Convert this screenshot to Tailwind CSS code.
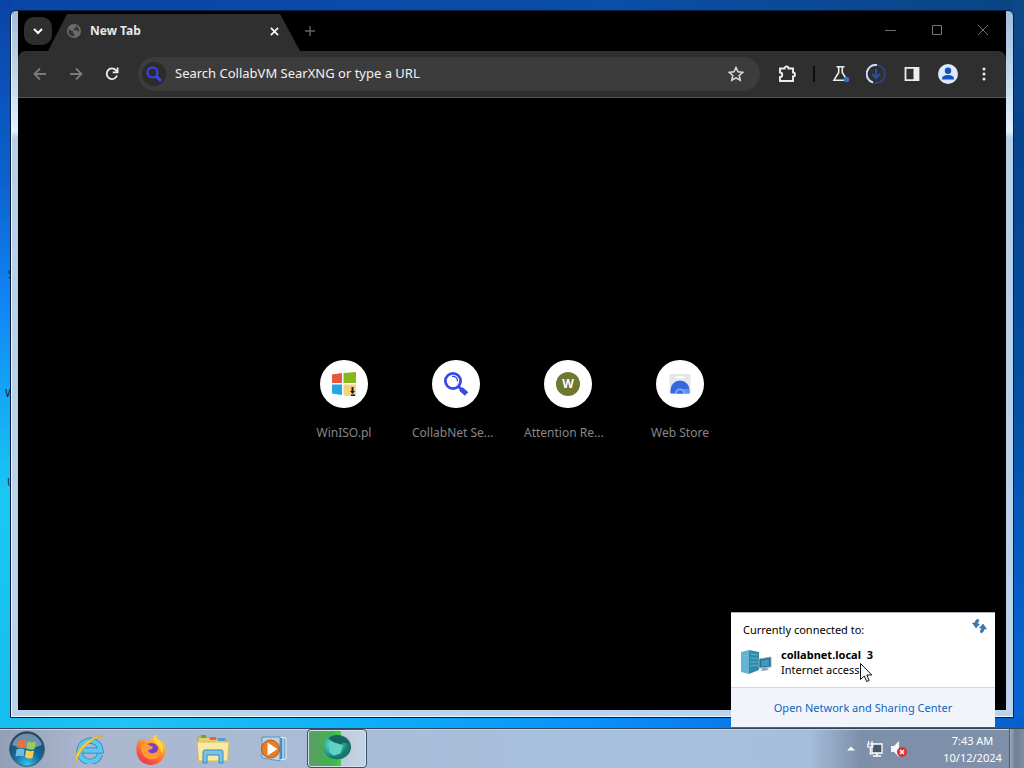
<!DOCTYPE html>
<html lang="en">
<head>
  <meta charset="UTF-8" />
  <meta name="viewport" content="width=device-width, initial-scale=1.0"/>
  <title>New Tab</title>
  <script src="https://cdn.jsdelivr.net/npm/@tailwindcss/browser@4"></script>
</head>
<body class="h-screen overflow-hidden flex flex-col font-['Noto_Sans','Open_Sans',sans-serif] text-xs">

  <!-- Desktop -->
  <main class="relative flex-1 min-h-0 flex p-[10px] bg-[linear-gradient(90deg,#0a45a8,#0a4ea8_60%,#0a4482)]">
    <div class="absolute inset-y-0 left-0 w-3 bg-[linear-gradient(180deg,#0a43a6,#0b62cf_25%,#1185f5_42%,#14a8f5_55%,#19c8f3_68%,#16bdee)]"></div>
    <div class="absolute inset-y-0 right-0 w-3 bg-[linear-gradient(180deg,#0d4888,#06448f_20%,#0350a4_55%,#0560ca_85%,#0666d2)]"></div>
    <div class="absolute inset-x-0 bottom-0 h-[11px] bg-[linear-gradient(90deg,#16bdee,#1fc3f5_12%,#0eb0f8_35%,#0a90fa_58%,#0874e6_75%,#0560cc)]"></div>
    <!-- Icon captions showing past the window edge -->
    <span class="absolute left-[8px] top-[267px] text-[11px] text-[#10233c]">S</span>
    <span class="absolute left-[5px] top-[386px] text-[11px] text-[#10233c]">W</span>
    <span class="absolute left-[7px] top-[475px] text-[11px] text-[#10233c]">U</span>

    <!-- Browser window -->
    <section class="relative flex-1 flex rounded-t-md border border-[#061d3f] bg-[linear-gradient(180deg,#9fbede,#dbedfb_16%,#e4f2fc_17%,#b6d0ea_18%,#bcd3ec)] pl-[7px] pr-[7px] pb-[7px] shadow-[inset_1px_-1px_0_#eef8ff]">
      <div class="flex-1 min-w-0 flex flex-col bg-black">
        <!-- Tab strip -->
        <div class="h-10 flex items-center text-[#e8e8e8]">
          <button aria-label="Search tabs" class="ml-[6px] size-7 rounded-[10px] bg-[#2e2e2e] grid place-items-center">
            <svg class="size-3" viewBox="0 0 12 12" fill="none" stroke="#fff" stroke-width="2"><path d="M2 4l4 4 4-4"/></svg>
          </button>
          <div class="self-end -ml-1 h-[37px] w-[252px] flex items-center pl-[19px] pr-[20px] pb-[3px] bg-[#2f2f2f] [clip-path:polygon(19px_0,232px_0,252px_100%,0_100%)]">
            <svg class="size-[14px]" viewBox="0 0 14 14"><circle cx="7" cy="7" r="7" fill="#6c6c6c"/><path d="M2 4.500q1.500 3 4 2.500v2l1.500 1v2.500q-5 0-6-4zM6 1.500h3v2H7.500V5H6l2 1.500h2.500L12.500 8q-.5-5-4-6.500z" fill="#363636"/></svg>
            <span class="ml-[9px] flex-1 font-bold">New Tab</span>
            <button aria-label="Close tab" class="size-3 grid place-items-center"><svg class="size-[9px]" viewBox="0 0 10 10" stroke="#f4f4f4" stroke-width="2"><path d="M1 1l8 8M9 1L1 9"/></svg></button>
          </div>
          <button aria-label="New tab" class="ml-[2px] size-4 grid place-items-center"><svg class="size-[10px]" viewBox="0 0 10 10" stroke="#626262" stroke-width="1.400"><path d="M5 0v10M0 5h10"/></svg></button>
          <div class="ml-auto flex pr-[17px] gap-[34px]">
            <button aria-label="Minimize"><svg class="size-3" viewBox="0 0 12 12" stroke="#6c6c6c"><path d="M0 5.500h11"/></svg></button>
            <button aria-label="Maximize"><svg class="size-3" viewBox="0 0 12 12" fill="none" stroke="#777"><path d="M1.500 .5h9v9h-9z"/></svg></button>
            <button aria-label="Close"><svg class="size-3" viewBox="0 0 12 12" stroke="#757575"><path d="M1 0l10 10M11 0L1 10"/></svg></button>
          </div>
        </div>

        <!-- Toolbar -->
        <div class="h-[47px] flex items-center rounded-t-lg bg-[#2f2f2f] border-b border-[#555] pl-[14px] pr-[14px]">
          <button aria-label="Back" class="size-4"><svg viewBox="0 0 16 16" fill="none" stroke="#7b7b7b" stroke-width="1.800"><path d="M14 8H3M8 2.500L2.500 8 8 13.500"/></svg></button>
          <button aria-label="Forward" class="ml-5 size-4"><svg viewBox="0 0 16 16" fill="none" stroke="#7b7b7b" stroke-width="1.800"><path d="M2 8h11M8 2.500L13.500 8 8 13.500"/></svg></button>
          <button aria-label="Reload" class="ml-5 size-4"><svg viewBox="0 0 16 16" fill="none" stroke="#ededed" stroke-width="1.800"><path d="M13 9.500A5.300 5.300 0 1 1 12 4.300L13.500 6M13.600 1.500V6.400H8.700"/></svg></button>
          <div class="ml-[18px] flex-1 h-[34px] rounded-full bg-[#3c3c3c] flex items-center pl-[4px] pr-[16px]">
            <span class="size-6 rounded-full bg-[#2b2b2b] grid place-items-center"><svg class="size-4" viewBox="0 0 16 16" fill="none" stroke="#3a46f0"><circle cx="6.500" cy="6.500" r="5" stroke-width="2"/><path d="M10 10l5 5" stroke-width="3"/></svg></span>
            <input type="text" aria-label="Address bar" placeholder="Search CollabVM SearXNG or type a URL" class="ml-[9px] flex-1 text-[13px] text-white placeholder:text-[#f2f2f2] outline-none"/>
            <button aria-label="Bookmark" class="size-4"><svg viewBox="0 0 16 16" fill="none" stroke="#dedede" stroke-width="1.500"><path d="M8 1.500l2 4.300 4.700.5-3.500 3.200 1 4.700L8 11.800l-4.200 2.400 1-4.700L1.300 6.300 6 5.800z"/></svg></button>
          </div>
          <button aria-label="Extensions" class="ml-[18px] size-[18px]"><svg viewBox="0 0 18 18" fill="none" stroke="#ededed" stroke-width="1.900"><path d="M2 3.500H6.500A2 2 0 0 1 10.500 3.500H15V7.500A2 2 0 0 1 15 11.500V16H2V12A2.200 2.200 0 0 0 2 7.500z"/></svg></button>
          <span class="ml-[17px] w-[2px] h-4 bg-[#0c0c0c]"></span>
          <button aria-label="Labs" class="ml-[17px] size-[18px]"><svg viewBox="0 0 18 18" fill="none" stroke="#ededed" stroke-width="1.600"><path d="M4.500 1.800h8M6.700 2v5.500L2 15.200h13L10.300 7.500V2"/><circle cx="14.500" cy="14.500" r="2.800" fill="#3474c4" stroke="none"/></svg></button>
          <button aria-label="Downloads" class="ml-[16px] size-5"><svg viewBox="0 0 20 20" fill="none"><circle cx="10" cy="10" r="9" stroke="#2b437c" stroke-width="2"/><path d="M11 1A9 9 0 0 0 7 18.500" stroke="#cfdcf3" stroke-width="2"/><path d="M10 5v9M6 10l4 4 4-4" stroke="#2c50a0" stroke-width="2"/></svg></button>
          <button aria-label="Side panel" class="ml-[18px] size-4"><svg viewBox="0 0 16 16"><path d="M1.500 1.800h13v12.400h-13z" fill="none" stroke="#ededed" stroke-width="1.800"/><path d="M9.500 1.500H15v13H9.500z" fill="#ededed"/></svg></button>
          <button aria-label="Profile" class="ml-[18px] size-5"><svg viewBox="0 0 20 20"><circle cx="10" cy="10" r="10" fill="#dce9fb"/><circle cx="10" cy="6.700" r="3.200" fill="#1253c4"/><path d="M4 15.500V14.200q1-3.200 6-3.200t6 3.200v1.300z" fill="#1253c4"/></svg></button>
          <button aria-label="Menu" class="ml-[18px] size-4"><svg viewBox="0 0 16 16" fill="#ededed"><circle cx="8" cy="3" r="1.500"/><circle cx="8" cy="8" r="1.500"/><circle cx="8" cy="13" r="1.500"/></svg></button>
        </div>

        <!-- New tab page -->
        <nav class="flex-1 flex justify-center items-start pt-[262px] text-[12px] leading-4 text-[#878787]">
          <a href="#" class="w-28 px-3 flex flex-col items-center gap-[17px]">
            <span class="size-12 rounded-full bg-white grid place-items-center">
              <svg class="size-6" viewBox="0 0 24 24"><path d="M0 2.500l10-1.500v10H0z" fill="#e8573c"/><path d="M11.500 1L24 0v11H11.500z" fill="#86b81b"/><path d="M0 12.500h10V23L0 21.500z" fill="#22a7e5"/><path d="M11.500 12.500H24V24H14l-2.500-1z" fill="#f5d27c"/><path d="M19.500 15h2v4H23l-2.500 3-2.500-3h1.500zM19 22.500h4V24h-4z" fill="#1c1c14"/></svg>
            </span>
            <span>WinISO.pl</span>
          </a>
          <a href="#" class="w-28 px-3 flex flex-col items-center gap-[17px]">
            <span class="size-12 rounded-full bg-white grid place-items-center">
              <svg class="size-6" viewBox="0 0 24 24" fill="none" stroke="#3649e8"><circle cx="9" cy="9" r="7.600" stroke-width="2.800"/><path d="M8 4.500a4.500 4.500 0 0 1 5.500 5" stroke-width="1.300"/><path d="M14.500 14.500l3 3" stroke-width="3"/><path d="M17 17l5.500 5" stroke-width="5"/></svg>
            </span>
            <span class="w-full">CollabNet Se...</span>
          </a>
          <a href="#" class="w-28 px-3 flex flex-col items-center gap-[17px]">
            <span class="size-12 rounded-full bg-white grid place-items-center">
              <span class="size-6 rounded-full bg-[#6f7733] grid place-items-center text-white font-bold">W</span>
            </span>
            <span class="w-full">Attention Re...</span>
          </a>
          <a href="#" class="w-28 px-3 flex flex-col items-center gap-[17px]">
            <span class="size-12 rounded-full bg-white grid place-items-center">
              <svg class="size-6" viewBox="0 0 24 24"><path d="M1.500 2h21v18q0 1.500-1.500 1.500H3q-1.500 0-1.500-1.500z" fill="#e3e6ea"/><rect x="7.500" y="4" width="9" height="2.500" rx="1.200" fill="#fafafa"/><path d="M2.500 21.500V18a9.500 9.500 0 0 1 19 0v3.500z" fill="#3567de"/><path d="M12 17h9.500v4.500H12z" fill="#78abf5" opacity=".6"/><path d="M7 21.500a5 5 0 0 1 10 0z" fill="#7fb0f6"/><path d="M8.800 21.500a3.200 3.200 0 0 1 6.400 0z" fill="#3971e0"/></svg>
            </span>
            <span>Web Store</span>
          </a>
        </nav>
      </div>
    </section>

    <!-- Network flyout -->
    <aside class="absolute right-[29px] bottom-px w-[264px] bg-white text-black border-t border-[#a8b0ba] text-[11px] leading-[15px]">
      <div class="relative h-[74px] px-3 pt-[9px]">
        <h2>Currently connected to:</h2>
        <button aria-label="Refresh" class="absolute right-2 top-[6px] size-[15px]"><svg viewBox="0 0 15 15" fill="#397db7" stroke="#245884" stroke-width=".5"><path d="M6 0Q3 1 3 4H.5L4 9l3.500-4H5.500q0-2 1.500-3zM9 14q3-1 3-4h2.500L11 5 7.500 9h2q0 2-1.500 3z"/></svg></button>
        <div class="flex items-center mt-[10px] -ml-[2px]">
          <svg class="w-[31px] h-6" viewBox="0 0 31 24"><path d="M0 2l8-2v24l-8-2z" fill="#62b5d2"/><path d="M8 0l10 2v18L8 24z" fill="#318aac"/><path d="M9.500 4l7 1M9.500 8l7 .5M9.500 12h7M9.500 16l7-1M1.500 6l5-.5M1.500 10h5" stroke="#79c6dc" stroke-width=".7"/><path d="M18 9l12-2v10l-12 1z" fill="#27698c" stroke="#8cb9cd"/><path d="M20 10.500l8-1.500v7l-8 .5z" fill="#3e97bc"/><path d="M21 18h5l2 2-8 1z" fill="#93a9b5"/></svg>
          <div class="ml-[9px]">
            <p class="font-bold whitespace-pre">collabnet.local  3</p>
            <p>Internet access</p>
          </div>
        </div>
      </div>
      <div class="h-10 bg-[#f1f5fb] border-t border-[#ccd9ea] grid place-items-center">
        <a href="#" class="text-[#0f64c0]">Open Network and Sharing Center</a>
      </div>
    </aside>
    <svg class="absolute right-[152px] bottom-[46px] w-3 h-[19px]" viewBox="0 0 12 19"><path d="M.5.5v16l3.800-3.500 2.400 5.500 2.500-1-2.400-5.500h5z" fill="#fff" stroke="#111"/></svg>
  </main>

  <!-- Taskbar -->
  <footer class="h-10 flex items-center bg-[linear-gradient(90deg,#929fb6,#aab6cd_8%,#a9bcd6_30%,#a5c0dd_60%,#a5bedb_79%,#7e90a9_84%,#7e91aa)] border-t border-[#33475e] shadow-[inset_0_1px_0_#c4d2e3]">
    <button aria-label="Start" class="ml-[9px] size-9">
      <svg viewBox="0 0 36 36"><defs><radialGradient id="orb" cx=".5" cy=".95" r=".9"><stop offset="0" stop-color="#35c6ee"/><stop offset=".45" stop-color="#14699b"/><stop offset="1" stop-color="#1d405e"/></radialGradient></defs><circle cx="18" cy="18" r="17.300" fill="url(#orb)" stroke="#34566c"/><path d="M3 14a15.500 15.500 0 0 1 30 0q-15 7-30 0z" fill="#c3d6e1" opacity=".5"/><path d="M9.500 10q4-2 7.500 0l-1 7q-4-2-8 0z" fill="#ed703b"/><path d="M18.500 10.500q4 2 8.500 0l-1.500 7.500q-4 1.500-8-.5z" fill="#9bcb55"/><path d="M7.500 18.500q4-2 8 0l-1 7q-4-1.500-8 0z" fill="#6dbde8"/><path d="M17 19q4 2 8 .5L23.500 27q-4 1.500-7.500-1z" fill="#f9cd4f"/></svg>
    </button>
    <button aria-label="Internet Explorer" class="ml-[28px] w-8 h-[30px]">
      <svg viewBox="0 0 32 30" fill="none"><path d="M27 20.500A10.500 10.500 0 1 1 27.500 16.500H10" stroke="#237fb8" stroke-width="6"/><path d="M27 20.500A10.500 10.500 0 1 1 27.500 16.500H10" stroke="#5dc6f0" stroke-width="4.600"/><path d="M3 28C-1 20 15 1 30 2 19 4 7 15 3 28z" fill="#f6d13c" stroke="#d9a929" stroke-width=".7"/></svg>
    </button>
    <button aria-label="Firefox" class="ml-[30px] size-8">
      <svg viewBox="0 0 32 32"><defs><linearGradient id="fox" x1=".8" y1="0" x2=".2" y2="1"><stop offset="0" stop-color="#ffe047"/><stop offset=".5" stop-color="#ff852b"/><stop offset="1" stop-color="#ed2656"/></linearGradient></defs><path d="M19 5q0-3 2-4 2 6 5 8l1-2q4 5 3.500 11A14.500 14.500 0 0 1 1.500 17Q1 10 5 5v4q2-3 4-4 0 3 3 4 3-4 7-4z" fill="url(#fox)"/><circle cx="16.500" cy="17" r="7" fill="#7540c8"/><path d="M6 12q5-3 8 0l4 2q-1 3-5 3 1 4 6 3 5-1 4-8 5 7 0 12-6 5-13 0-5-5-4-12z" fill="#ff9a32"/><path d="M25 8q5 6 2 13-2-8-6-11-4-4-2-8 1 4 6 6z" fill="#ffd542"/></svg>
    </button>
    <button aria-label="File Explorer" class="ml-[29px] w-[34px] h-[30px]">
      <svg viewBox="0 0 34 30"><path d="M2 3h10l2 2h16v20H2z" fill="#e8cc72" stroke="#bb9a43"/><path d="M5 1h5v3H5z" fill="#54a84d"/><path d="M14 3h6v3h-6z" fill="#e3634c"/><path d="M22 4h7v3h-7z" fill="#549cd1"/><path d="M1 8h32l-1.500 19H2.500z" fill="#f9e9a3" stroke="#d7bd65"/><path d="M7 29V18q0-2 2-2h16q2 0 2 2v11h-4v-8H11v8z" fill="#79c3e7" stroke="#3c87bd"/></svg>
    </button>
    <button aria-label="Media Player" class="ml-[30px] w-7 h-[26px]">
      <svg viewBox="0 0 28 26"><path d="M11 2h15v21H11z" fill="#77a7d0" stroke="#e5f0fa"/><path d="M8 1.500h15v22H8z" fill="#4989c0" stroke="#ecf5fb"/><path d="M2 1h18v24L2 22z" fill="#b9d4ea" stroke="#6391bb"/><circle cx="10.500" cy="13" r="9" fill="#ed7b20" stroke="#bb5714"/><path d="M7.500 6.500v13l10-6.500z" fill="#fff"/></svg>
    </button>
    <button aria-label="Browser" class="ml-[19px] w-[60px] h-[39px] rounded-sm border border-[#37516a] bg-[linear-gradient(90deg,#5b9b69,#3eb84a_45%,#48cc40_56%,#bccbdc_57%,#c6d3e3)] shadow-[inset_0_0_0_1px_#d5e3ef] grid place-items-center">
      <svg class="size-7 mb-1" viewBox="0 0 32 32"><defs><radialGradient id="ball" cx=".35" cy=".4" r=".7"><stop offset="0" stop-color="#75e6d5"/><stop offset=".55" stop-color="#299f90"/><stop offset="1" stop-color="#0b5b53"/></radialGradient></defs><ellipse cx="16" cy="16" rx="16" ry="14" fill="url(#ball)"/><path d="M6 6q8-7 19-1l6 7-8-1-3 3-9-4z" fill="#17665e"/><path d="M31 18q-2 11-14 12-7 0-11-4l9 0q7-1 9-7z" fill="#17786c"/><path d="M8 10l9 2 6 2-3 9-8 3-5-5z" fill="#5ed2c5"/></svg>
    </button>

    <!-- Tray -->
    <div class="ml-auto flex items-center h-full text-white">
      <button aria-label="Show hidden icons" class="w-2"><svg viewBox="0 0 8 5" fill="#fff"><path d="M0 4.500L4 .5l4 4z"/></svg></button>
      <button aria-label="Network" class="ml-[12px] size-4"><svg viewBox="0 0 16 16" fill="none"><path d="M5 3h10v9H5z" fill="#495867" stroke="#fff" stroke-width="1.300"/><path d="M6 15h8M10 12v3" stroke="#fff" stroke-width="1.500"/><path d="M1.500 0v3M5 0v3M.8 3h5v3h-5zM3.300 6v7H6" stroke="#fff" stroke-width="1.200"/></svg></button>
      <button aria-label="Volume muted" class="ml-[8px] size-4"><svg viewBox="0 0 16 16"><path d="M0 5h3l5-5v16l-5-5H0z" fill="#f4f6f8"/><circle cx="11" cy="11" r="5" fill="#d93230"/><path d="M9 9l4 4M13 9l-4 4" stroke="#fff" stroke-width="1.500"/></svg></button>
      <div class="w-[102px] pl-[30px] pr-[1px] text-[11px] whitespace-nowrap flex flex-col items-center leading-[17px]">
        <time>7:43 AM</time>
        <time>10/12/2024</time>
      </div>
      <button aria-label="Show desktop" class="w-[15px] h-full border-l border-[#4b5d72] bg-[linear-gradient(90deg,#9cabbc,#6d7f92_40%,#7e909f)]"></button>
    </div>
  </footer>
</body>
</html>
